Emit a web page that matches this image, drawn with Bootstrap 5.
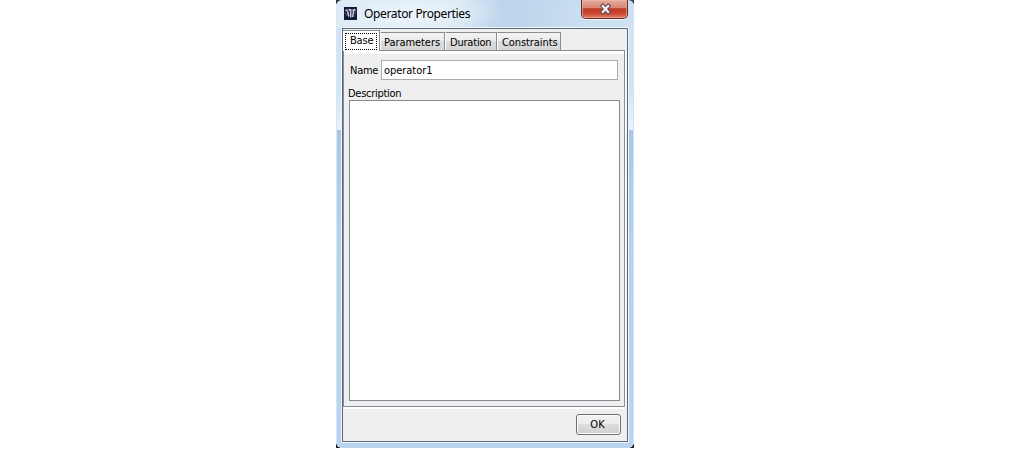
<!DOCTYPE html>
<html lang="en">
<head>
<meta charset="utf-8">
<title>Operator Properties</title>
<link href="https://cdn.jsdelivr.net/npm/bootstrap@5.3.0/dist/css/bootstrap.min.css" rel="stylesheet">
<style>
body{background:#fff;font:11px/14px "DejaVu Sans Condensed","DejaVu Sans",sans-serif;color:#000;overflow:hidden}
.back{width:298px;height:448px;margin-left:336px;background:linear-gradient(90deg,#333 5px,transparent 5px 293px,#444 293px) 0 0/100% 4px no-repeat,linear-gradient(90deg,#222 4px,transparent 4px 294px,#222 294px) 0 100%/100% 4px no-repeat}
.win{width:298px;height:448px;padding:0 5px;
 background:radial-gradient(ellipse 95px 26px at 75px 14px,#f1f7fcdd 0,#e8f2fa99 50%,transparent) no-repeat 0 0/100% 28px,
 linear-gradient(110deg,#dceaf6 0,#d9e8f5 38%,#bdd5eb 54%,#bfd6ec 65%,#c9def0 80%,#cfe1f2) no-repeat 0 0/100% 28px,
 linear-gradient(#d1e3f4 28px,#d3e5f5 90px,#eaf3fa 130px,#a9c7e4 130px,#b9d3ec 260px,#b9d4ee);
 border-radius:6px;box-shadow:inset 1px 0 #d5e6f5,inset -1px 0 #d0e2f3}
.titlebar{height:27px}
.logo{margin:7px 0 0 3px}
.caption{font:12px/16px "Noto Sans",sans-serif;margin:6px 0 0 7px;letter-spacing:-.36px;white-space:nowrap}
.close-box{width:47px;height:19px;margin-right:1px;border:1px solid #622b2b;border-top:0;border-radius:0 0 5px 5px;
 background:linear-gradient(#e4aa9c 0,#d98572 45%,#bd3a25 48%,#c7432b 70%,#e07a5d);box-shadow:inset 0 0 0 1px #f0b9ad99,0 1px 0 #eef6fc}
.client{width:288px;height:416px;border:1px solid #f0f7fc}
.client-in{height:414px;border:1px solid #59697e;background:#efefef}
.tabs{height:21px;padding-top:1px}
.tab-x{height:18px;border:1px solid #898c95;border-left-color:#fff;border-bottom:0;padding:3px 0 0 4px;background:linear-gradient(#f3f3f3,#ebebeb 48%,#ddd 50%,#d5d5d5);white-space:nowrap}
.tab-on{height:21px;width:37px;background:#fff;border:1px solid #898c95;border-left:0;border-bottom:0;padding:2px;margin-bottom:-1px;position:relative}
.tab-on span{display:block;height:17px;border:1px dotted #000;padding-left:4px;line-height:14px;letter-spacing:-.2px}
.panel-x{height:357px;width:282px;border:1px solid #898c95;box-shadow:1px 1px 0 #fff,0 2px 0 #fff;padding:9px 4px 0;background:linear-gradient(#fff 3px,#efefef 3px)}
.name-lbl{padding-top:4px;letter-spacing:-.25px}
.field{width:237px;height:20px;border:1px solid #ababab;background:#fff;padding:3px 0 0 2px;letter-spacing:-.05px}
.desc{height:20px;padding-top:7px;letter-spacing:-.28px}
.area{width:271px;height:301px;margin-left:1px;border:1px solid #828790;background:#fff}
.ok-x{width:45px;height:21px;border:1px solid #707070;border-radius:3px;background:linear-gradient(#f3f3f3,#ebebeb 48%,#ddd 50%,#cfcfcf);box-shadow:inset 0 0 0 1px #fcfcfc;padding:3px 2px 0 0}
</style>
</head>
<body>
<div class="back"><main class="win">
 <header class="titlebar d-flex align-items-start">
  <svg class="logo flex-shrink-0" width="13" height="13" viewBox="0 0 13 13"><path fill="#151937" d="M0 0h13v13H0z"/><path d="M1.5 3.5l2-.5M4.5 2.5l3 .8M8.5 3.5l3-1" stroke="#e0e0ea" stroke-width="1.6"/><path d="M3.5 4l1.3 5.5M6.7 3.5v7M9.6 3.8L8.7 10" fill="none" stroke="#c8cad9" stroke-width="1.5"/><path d="M1 5l2 4M11.8 4l-1 4" stroke="#4c5378"/></svg>
  <span class="caption">Operator Properties</span>
  <span class="close-box ms-auto d-flex justify-content-center flex-shrink-0"><svg width="13" height="12" viewBox="0 0 13 12" style="margin:3px 0 0 1px"><path d="M3.8 3l5.4 6M9.2 3L3.8 9" stroke="#5e4652" stroke-width="4.2" stroke-linecap="square"/><path d="M3.8 3l5.4 6M9.2 3L3.8 9" stroke="#eeeef2" stroke-width="2.3" stroke-linecap="square"/></svg></span>
 </header>
 <section class="client"><div class="client-in">
  <nav class="tabs d-flex align-items-end">
   <div class="tab-on"><span>Base</span></div>
   <div class="tab-x" style="width:65px;padding-left:3px;letter-spacing:-.06px">Parameters</div>
   <div class="tab-x" style="width:52px;letter-spacing:-.2px">Duration</div>
   <div class="tab-x" style="width:64px;letter-spacing:-.08px">Constraints</div>
  </nav>
  <div class="panel-x">
   <div class="d-flex justify-content-between" style="padding:0 2px"><span class="name-lbl">Name</span><div class="field">operator1</div></div>
   <div class="desc">Description</div>
   <div class="area"></div>
  </div>
  <div class="d-flex justify-content-end" style="padding:7px 6px 0 0"><div class="ok-x text-center">OK</div></div>
 </div></section>
</main></div>
<script src="https://cdn.jsdelivr.net/npm/bootstrap@5.3.0/dist/js/bootstrap.bundle.min.js"></script>
</body>
</html>
